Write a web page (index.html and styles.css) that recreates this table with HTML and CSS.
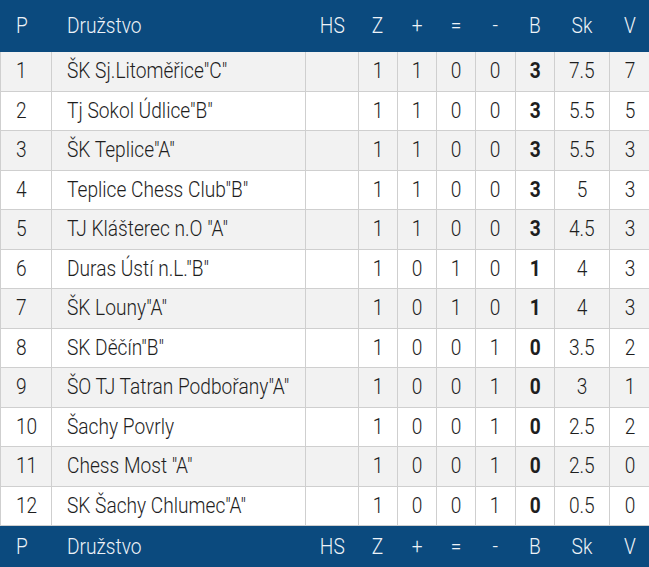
FILE: index.html
```html
<!DOCTYPE html>
<html lang="cs">
<head>
<meta charset="utf-8">
<link rel="stylesheet" href="styles.css">
</head>
<body>
<table class="standings">
  <colgroup>
    <col class="c-p"><col class="c-team"><col class="c-hs"><col class="c-n"><col class="c-n"><col class="c-n"><col class="c-n4"><col class="c-n"><col class="c-sk"><col class="c-v">
  </colgroup>
  <thead>
    <tr><th class="left"><span class="t">P</span></th><th class="left"><span class="t">Družstvo</span></th><th><span class="t">HS</span></th><th><span class="t">Z</span></th><th><span class="t">+</span></th><th><span class="t">=</span></th><th><span class="t">-</span></th><th><span class="t">B</span></th><th><span class="t">Sk</span></th><th><span class="t">V</span></th></tr>
  </thead>
  <tbody>
    <tr><td class="left"><span class="t">1</span></td><td class="left"><span class="t">ŠK Sj.Litoměřice"C"</span></td><td></td><td><span class="t">1</span></td><td><span class="t">1</span></td><td><span class="t">0</span></td><td><span class="t">0</span></td><td class="b"><span class="t">3</span></td><td><span class="t">7.5</span></td><td><span class="t">7</span></td></tr>
    <tr><td class="left"><span class="t">2</span></td><td class="left"><span class="t">Tj Sokol Údlice"B"</span></td><td></td><td><span class="t">1</span></td><td><span class="t">1</span></td><td><span class="t">0</span></td><td><span class="t">0</span></td><td class="b"><span class="t">3</span></td><td><span class="t">5.5</span></td><td><span class="t">5</span></td></tr>
    <tr><td class="left"><span class="t">3</span></td><td class="left"><span class="t">ŠK Teplice"A"</span></td><td></td><td><span class="t">1</span></td><td><span class="t">1</span></td><td><span class="t">0</span></td><td><span class="t">0</span></td><td class="b"><span class="t">3</span></td><td><span class="t">5.5</span></td><td><span class="t">3</span></td></tr>
    <tr><td class="left"><span class="t">4</span></td><td class="left"><span class="t">Teplice Chess Club"B"</span></td><td></td><td><span class="t">1</span></td><td><span class="t">1</span></td><td><span class="t">0</span></td><td><span class="t">0</span></td><td class="b"><span class="t">3</span></td><td><span class="t">5</span></td><td><span class="t">3</span></td></tr>
    <tr><td class="left"><span class="t">5</span></td><td class="left"><span class="t">TJ Klášterec n.O "A"</span></td><td></td><td><span class="t">1</span></td><td><span class="t">1</span></td><td><span class="t">0</span></td><td><span class="t">0</span></td><td class="b"><span class="t">3</span></td><td><span class="t">4.5</span></td><td><span class="t">3</span></td></tr>
    <tr><td class="left"><span class="t">6</span></td><td class="left"><span class="t">Duras Ústí n.L."B"</span></td><td></td><td><span class="t">1</span></td><td><span class="t">0</span></td><td><span class="t">1</span></td><td><span class="t">0</span></td><td class="b"><span class="t">1</span></td><td><span class="t">4</span></td><td><span class="t">3</span></td></tr>
    <tr><td class="left"><span class="t">7</span></td><td class="left"><span class="t">ŠK Louny"A"</span></td><td></td><td><span class="t">1</span></td><td><span class="t">0</span></td><td><span class="t">1</span></td><td><span class="t">0</span></td><td class="b"><span class="t">1</span></td><td><span class="t">4</span></td><td><span class="t">3</span></td></tr>
    <tr><td class="left"><span class="t">8</span></td><td class="left"><span class="t">SK Děčín"B"</span></td><td></td><td><span class="t">1</span></td><td><span class="t">0</span></td><td><span class="t">0</span></td><td><span class="t">1</span></td><td class="b"><span class="t">0</span></td><td><span class="t">3.5</span></td><td><span class="t">2</span></td></tr>
    <tr><td class="left"><span class="t">9</span></td><td class="left"><span class="t">ŠO TJ Tatran Podbořany"A"</span></td><td></td><td><span class="t">1</span></td><td><span class="t">0</span></td><td><span class="t">0</span></td><td><span class="t">1</span></td><td class="b"><span class="t">0</span></td><td><span class="t">3</span></td><td><span class="t">1</span></td></tr>
    <tr><td class="left"><span class="t">10</span></td><td class="left"><span class="t">Šachy Povrly</span></td><td></td><td><span class="t">1</span></td><td><span class="t">0</span></td><td><span class="t">0</span></td><td><span class="t">1</span></td><td class="b"><span class="t">0</span></td><td><span class="t">2.5</span></td><td><span class="t">2</span></td></tr>
    <tr><td class="left"><span class="t">11</span></td><td class="left"><span class="t">Chess Most "A"</span></td><td></td><td><span class="t">1</span></td><td><span class="t">0</span></td><td><span class="t">0</span></td><td><span class="t">1</span></td><td class="b"><span class="t">0</span></td><td><span class="t">2.5</span></td><td><span class="t">0</span></td></tr>
    <tr><td class="left"><span class="t">12</span></td><td class="left"><span class="t">SK Šachy Chlumec"A"</span></td><td></td><td><span class="t">1</span></td><td><span class="t">0</span></td><td><span class="t">0</span></td><td><span class="t">1</span></td><td class="b"><span class="t">0</span></td><td><span class="t">0.5</span></td><td><span class="t">0</span></td></tr>
  </tbody>
  <tfoot>
    <tr><th class="left"><span class="t">P</span></th><th class="left"><span class="t">Družstvo</span></th><th><span class="t">HS</span></th><th><span class="t">Z</span></th><th><span class="t">+</span></th><th><span class="t">=</span></th><th><span class="t">-</span></th><th><span class="t">B</span></th><th><span class="t">Sk</span></th><th><span class="t">V</span></th></tr>
  </tfoot>
</table>
</body>
</html>
```

FILE: styles.css
```css
html, body {
  margin: 0;
  padding: 0;
  background: #ffffff;
}

.standings {
  border-collapse: collapse;
  table-layout: fixed;
  width: 650px;
  font-family: Roboto, "Liberation Sans", sans-serif;
  font-weight: 300;
  font-size: 22px;
  line-height: 1;
  color: #1e1e1e;
}

.c-p { width: 51px; }
.c-team { width: 254px; }
.c-hs { width: 53px; }
.c-n { width: 39px; }
.c-n4 { width: 40px; }
.c-sk { width: 55px; }
.c-v { width: 41px; }

.t {
  display: inline-block;
  transform: scaleX(0.87);
  transform-origin: center;
  white-space: nowrap;
}

.left .t {
  transform-origin: left center;
}

.standings th {
  background: #0b4a7e;
  color: #eef3f8;
  font-weight: 300;
  text-align: center;
  padding: 0;
  border: 1px solid #0b4a7e;
}

.standings thead th {
  height: 50px;
}

.standings tfoot th {
  height: 41px;
}

.standings td {
  height: 38.5px;
  padding: 0;
  text-align: center;
  border: 1px solid #cfcfcf;
  white-space: nowrap;
}

.standings tbody tr:nth-child(odd) td {
  background: #f2f2f2;
}

.standings .left {
  text-align: left;
  padding-left: 15px;
}

.standings td.b {
  font-weight: 700;
}
```
